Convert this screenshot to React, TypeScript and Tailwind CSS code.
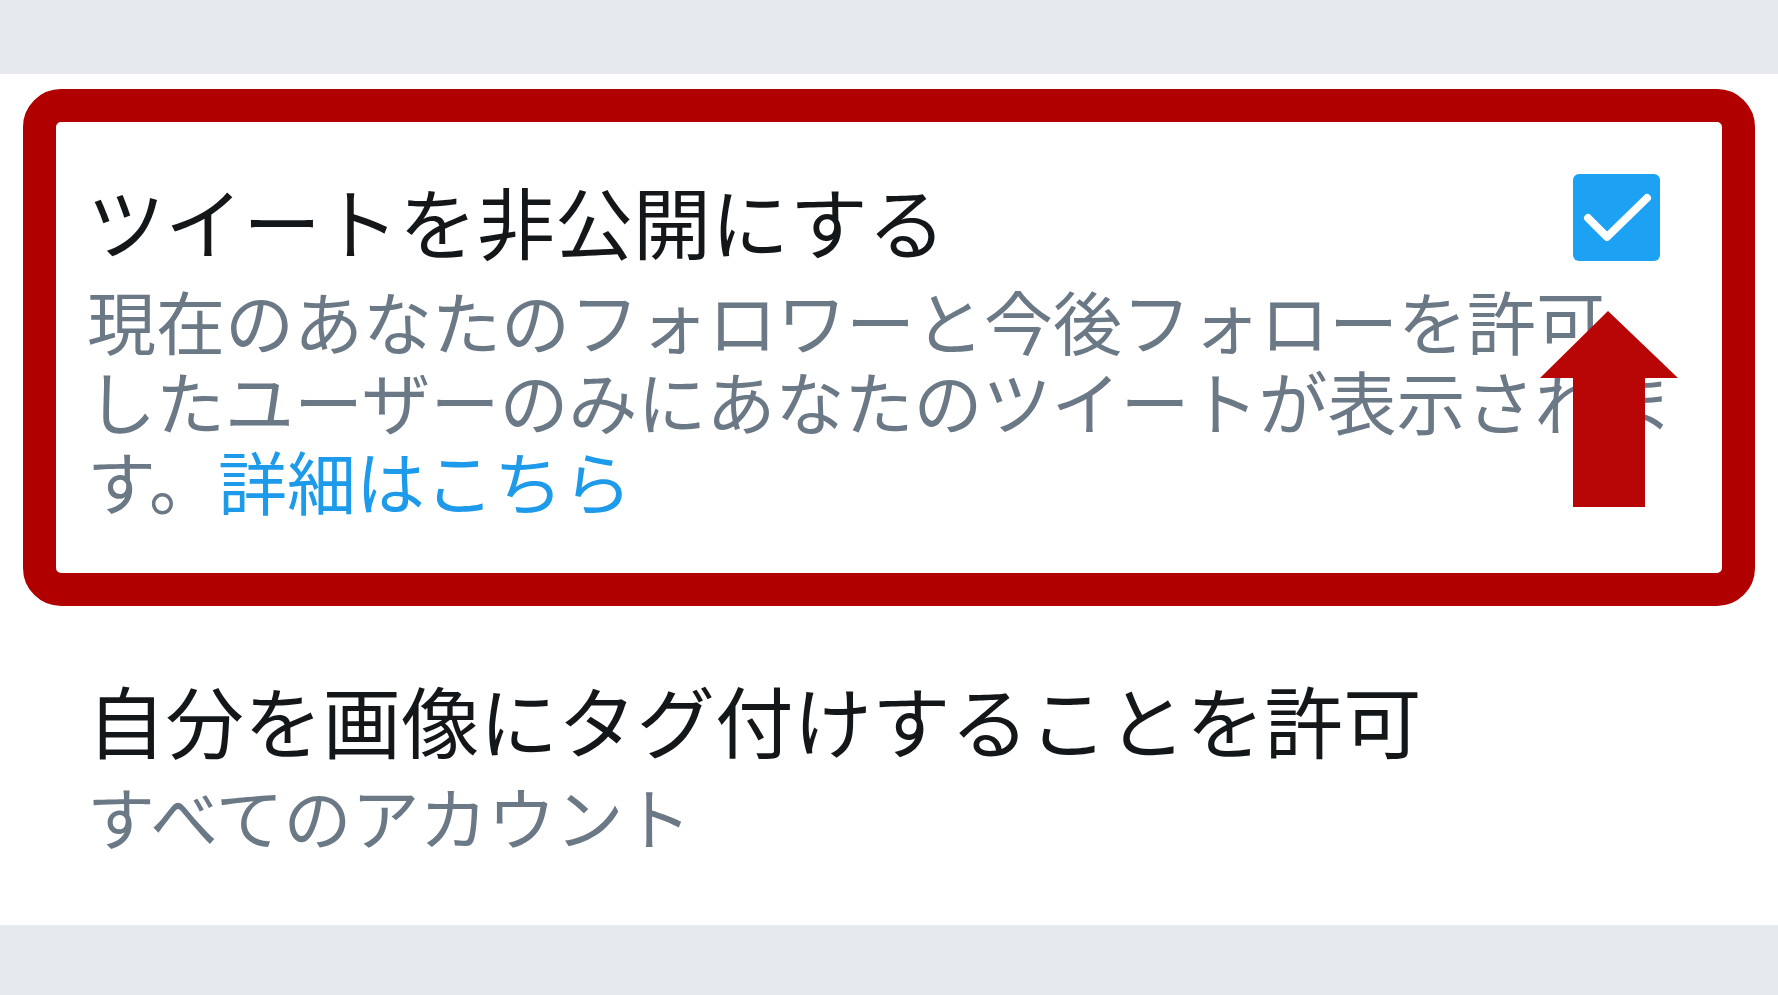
const jp = { fontFamily: '"Noto Sans CJK JP", "Noto Sans", sans-serif' };

function Checkbox() {
  return (
    <div className="flex h-[87px] w-[87px] shrink-0 items-center justify-center rounded-[6px] bg-[#1da1f2]">
      <svg width="87" height="87" viewBox="0 0 87 87" fill="none">
        <path
          d="M15 44 L34 63 L74 24"
          stroke="white"
          strokeWidth="8"
          strokeLinecap="round"
          strokeLinejoin="round"
        />
      </svg>
    </div>
  );
}

function UpArrow() {
  return (
    <svg
      className="absolute left-[1482px] top-[189px]"
      width="142"
      height="196"
      viewBox="0 0 142 196"
    >
      <polygon points="70,0 140,67 107,67 107,196 35,196 35,67 2,67" fill="#b80606" />
    </svg>
  );
}

export default function App() {
  return (
    <div className="flex h-[995px] w-full flex-col bg-[#e6eaef]" style={jp}>
      <div className="h-[74px] shrink-0" />

      <div className="bg-white px-[23px] pt-[15px]">
        <div className="relative rounded-[38px] border-[33px] border-[#b00000] pl-[31px] pr-[62px] pt-[52px] pb-[53px]">
          <div className="flex items-start justify-between">
            <div className="pt-[6px] text-[78px] leading-[80px] text-[#14171a]">
              ツイートを非公開にする
            </div>
            <Checkbox />
          </div>
          <p className="mt-[19px] whitespace-nowrap text-[69px] leading-[80px] text-[#6b7885]">
            現在のあなたのフォロワーと今後フォローを許可
            <br />
            したユーザーのみにあなたのツイートが表示されま
            <br />
            す。<a className="text-[#1d9bea]">詳細はこちら</a>
          </p>
          <UpArrow />
        </div>

        <div className="pl-[64px] pt-[73px] pb-[69px]">
          <div className="text-[78.5px] leading-[80px] text-[#14171a]">
            自分を画像にタグ付けすることを許可
          </div>
          <div className="mt-[17px] text-[68px] leading-[80px] text-[#6b7885]">
            すべてのアカウント
          </div>
        </div>
      </div>
    </div>
  );
}
